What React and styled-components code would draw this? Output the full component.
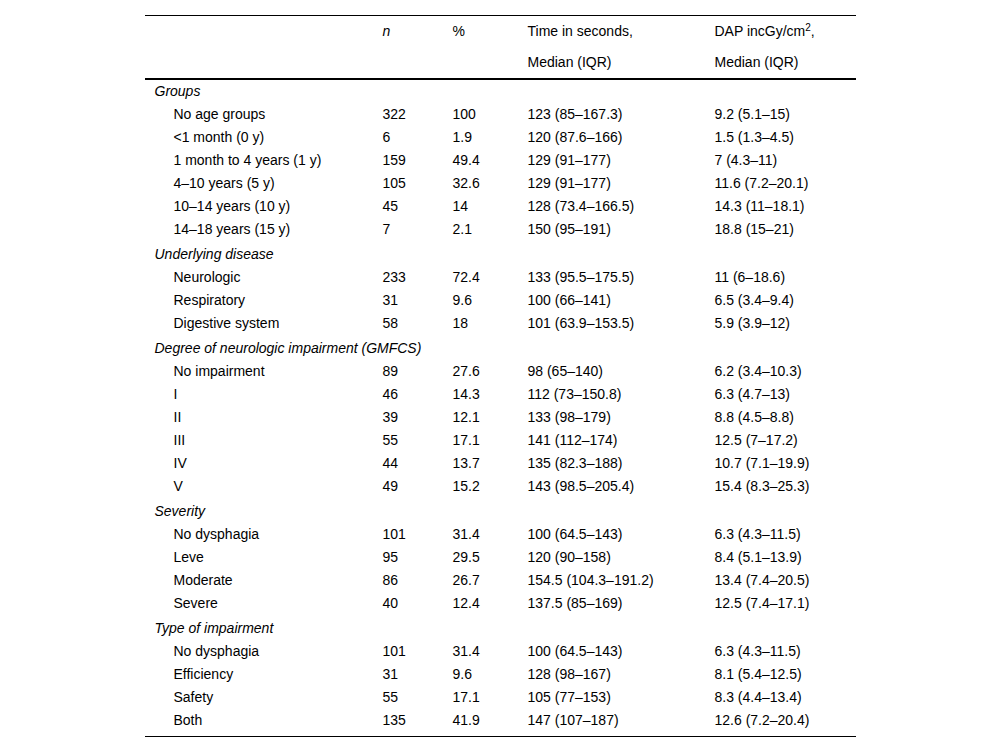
import React from 'react';
import styled, { createGlobalStyle } from 'styled-components';

const GlobalStyle = createGlobalStyle`
  body {
    margin: 0;
    background: #fff;
    font-family: "Liberation Sans", Arial, sans-serif;
    color: #000;
  }
`;

const Frame = styled.div`
  width: 711px;
  margin: 15px auto 0;
  border-top: 1px solid #000;
  border-bottom: 1px solid #000;
  padding-bottom: 4px;
`;

const Table = styled.table`
  width: 100%;
  border-collapse: collapse;
  table-layout: fixed;
  font-size: 14px;
`;

const HeadCell = styled.th`
  text-align: left;
  font-weight: normal;
  vertical-align: top;
  padding: 0 0 0 10px;
  line-height: 31px;
  border-bottom: 2px solid #000;
  font-style: ${p => (p.italic ? 'italic' : 'normal')};
`;

const Sup = styled.sup`
  font-size: 10px;
  line-height: 0;
  vertical-align: 5px;
`;

const GroupCell = styled.td`
  font-style: italic;
  padding: ${p => (p.first ? '0' : '2px')} 0 0 10px;
  line-height: 23px;
  white-space: nowrap;
`;

const Cell = styled.td`
  padding: 0 0 0 ${p => (p.indent ? '29px' : '10px')};
  line-height: 23px;
  white-space: nowrap;
`;

const groups = [
  {
    title: 'Groups',
    rows: [
      ['No age groups', '322', '100', '123 (85–167.3)', '9.2 (5.1–15)'],
      ['<1 month (0 y)', '6', '1.9', '120 (87.6–166)', '1.5 (1.3–4.5)'],
      ['1 month to 4 years (1 y)', '159', '49.4', '129 (91–177)', '7 (4.3–11)'],
      ['4–10 years (5 y)', '105', '32.6', '129 (91–177)', '11.6 (7.2–20.1)'],
      ['10–14 years (10 y)', '45', '14', '128 (73.4–166.5)', '14.3 (11–18.1)'],
      ['14–18 years (15 y)', '7', '2.1', '150 (95–191)', '18.8 (15–21)'],
    ],
  },
  {
    title: 'Underlying disease',
    rows: [
      ['Neurologic', '233', '72.4', '133 (95.5–175.5)', '11 (6–18.6)'],
      ['Respiratory', '31', '9.6', '100 (66–141)', '6.5 (3.4–9.4)'],
      ['Digestive system', '58', '18', '101 (63.9–153.5)', '5.9 (3.9–12)'],
    ],
  },
  {
    title: 'Degree of neurologic impairment (GMFCS)',
    rows: [
      ['No impairment', '89', '27.6', '98 (65–140)', '6.2 (3.4–10.3)'],
      ['I', '46', '14.3', '112 (73–150.8)', '6.3 (4.7–13)'],
      ['II', '39', '12.1', '133 (98–179)', '8.8 (4.5–8.8)'],
      ['III', '55', '17.1', '141 (112–174)', '12.5 (7–17.2)'],
      ['IV', '44', '13.7', '135 (82.3–188)', '10.7 (7.1–19.9)'],
      ['V', '49', '15.2', '143 (98.5–205.4)', '15.4 (8.3–25.3)'],
    ],
  },
  {
    title: 'Severity',
    rows: [
      ['No dysphagia', '101', '31.4', '100 (64.5–143)', '6.3 (4.3–11.5)'],
      ['Leve', '95', '29.5', '120 (90–158)', '8.4 (5.1–13.9)'],
      ['Moderate', '86', '26.7', '154.5 (104.3–191.2)', '13.4 (7.4–20.5)'],
      ['Severe', '40', '12.4', '137.5 (85–169)', '12.5 (7.4–17.1)'],
    ],
  },
  {
    title: 'Type of impairment',
    rows: [
      ['No dysphagia', '101', '31.4', '100 (64.5–143)', '6.3 (4.3–11.5)'],
      ['Efficiency', '31', '9.6', '128 (98–167)', '8.1 (5.4–12.5)'],
      ['Safety', '55', '17.1', '105 (77–153)', '8.3 (4.4–13.4)'],
      ['Both', '135', '41.9', '147 (107–187)', '12.6 (7.2–20.4)'],
    ],
  },
];

const App = () => (
  <>
    <GlobalStyle />
    <Frame>
      <Table>
        <colgroup>
          <col style={{ width: 228 }} />
          <col style={{ width: 70 }} />
          <col style={{ width: 75 }} />
          <col style={{ width: 187 }} />
          <col style={{ width: 151 }} />
        </colgroup>
        <thead>
          <tr>
            <HeadCell />
            <HeadCell italic>n</HeadCell>
            <HeadCell>%</HeadCell>
            <HeadCell>
              Time in seconds,
              <br />
              Median (IQR)
            </HeadCell>
            <HeadCell>
              DAP incGy/cm<Sup>2</Sup>,
              <br />
              Median (IQR)
            </HeadCell>
          </tr>
        </thead>
        <tbody>
          {groups.map((g, gi) => (
            <React.Fragment key={g.title}>
              <tr>
                <GroupCell colSpan={5} first={gi === 0}>{g.title}</GroupCell>
              </tr>
              {g.rows.map((r, ri) => (
                <tr key={ri}>
                  {r.map((v, ci) => (
                    <Cell key={ci} indent={ci === 0}>{v}</Cell>
                  ))}
                </tr>
              ))}
            </React.Fragment>
          ))}
        </tbody>
      </Table>
    </Frame>
  </>
);

export default App;
